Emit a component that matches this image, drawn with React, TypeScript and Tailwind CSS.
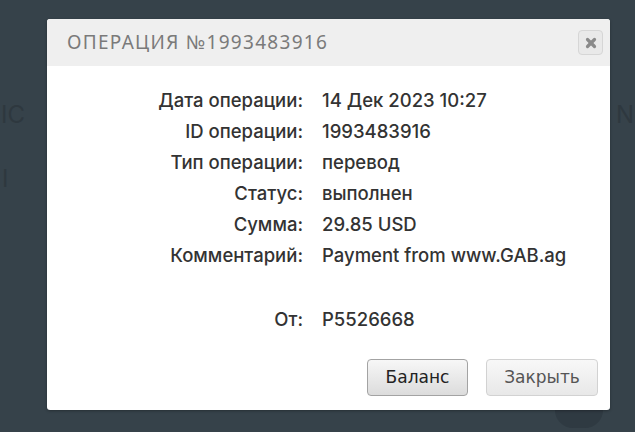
import { X } from "lucide-react";

const rows: [string, string][] = [
  ["Дата операции:", "14 Дек 2023 10:27"],
  ["ID операции:", "1993483916"],
  ["Тип операции:", "перевод"],
  ["Статус:", "выполнен"],
  ["Сумма:", "29.85 USD"],
  ["Комментарий:", "Payment from www.GAB.ag"],
];

export default function App() {
  return (
    <div className="relative w-[635px] h-[432px] overflow-hidden bg-[#36424a] font-['Inter',sans-serif]">
      {/* фон страницы под модалкой */}
      <div className="flex justify-between pt-[103px] px-[1px] text-[24px] text-[#2e383f] leading-none">
        <span>IC</span>
        <span>N</span>
      </div>
      <div className="pt-[40px] pl-[2px] text-[24px] text-[#2e383f] leading-none">I</div>
      <div className="absolute left-[555px] top-[392px] w-[48px] h-[36px] rounded-full bg-[#2f3a42]" />

      {/* Модалка: операция */}
      <div className="absolute left-[47px] top-[19px] w-[563px] h-[391px] bg-white rounded-[3px] overflow-hidden shadow-[0_1px_3px_rgba(0,0,0,0.3)]">
        <div className="h-[47px] bg-[#efefef] flex items-center justify-between pl-[20px] pr-[7px]">
          <h2 className="text-[19px] tracking-[1.3px] text-[#7a7a7a] font-['Noto_Sans',sans-serif]">
            ОПЕРАЦИЯ №1993483916
          </h2>
          <button className="w-[25px] h-[25px] rounded-[4px] border border-[#d6d6d6] bg-[#e9e9e9] flex items-center justify-center">
            <X size={14} strokeWidth={5.5} className="text-[#8a8a8a]" />
          </button>
        </div>

        <div className="pt-[19px] grid grid-cols-[256px_1fr] gap-x-[19px] text-[18.5px] font-medium leading-[31px] text-[#333]">
          {rows.map(([label, value]) => (
            <div key={label} className="contents">
              <div className="text-right">{label}</div>
              <div>{value}</div>
            </div>
          ))}
          <div className="h-[33px] col-span-2" />
          <div className="text-right">От:</div>
          <div>P5526668</div>
        </div>

        <div className="flex justify-end gap-[18px] pr-[12px] pt-[24px] font-['DejaVu_Sans',sans-serif] text-[17px]">
          <button className="w-[101px] h-[37px] rounded-[4px] border border-[#a3a3a3] bg-gradient-to-b from-[#f7f7f7] to-[#dcdcdc] text-[#222]">
            Баланс
          </button>
          <button className="w-[112px] h-[37px] rounded-[4px] border border-[#d2d2d2] bg-gradient-to-b from-[#f8f8f8] to-[#e8e8e8] text-[#555]">
            Закрыть
          </button>
        </div>
      </div>
    </div>
  );
}
